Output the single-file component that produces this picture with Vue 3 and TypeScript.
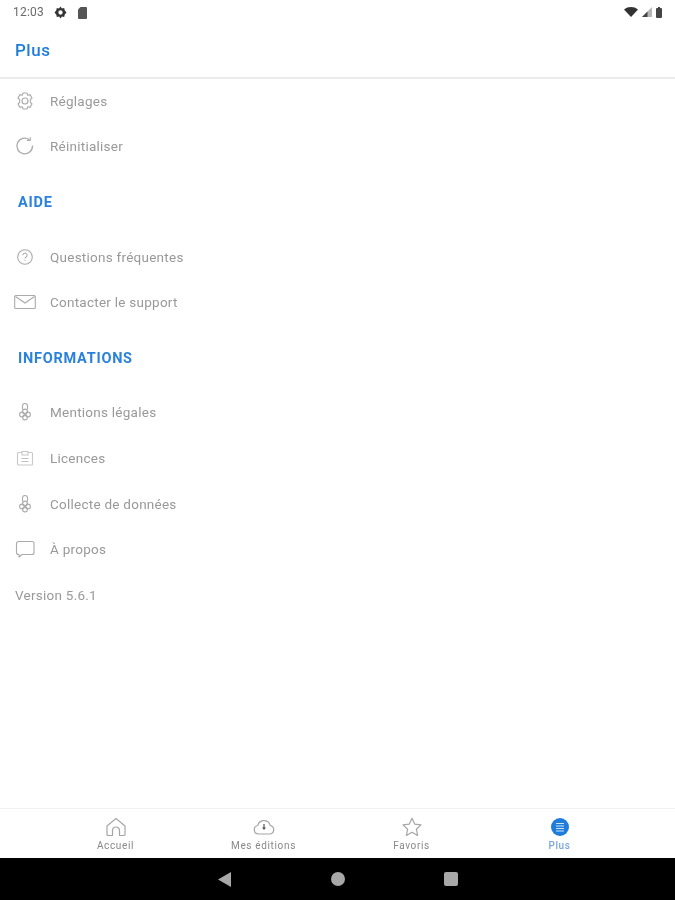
<template>
  <div class="screen">
    <div class="status-bar">
      <span class="clock">12:03</span>
      <svg class="status-icon" width="13" height="13" viewBox="0 0 24 24">
        <path fill="#333" fill-rule="evenodd" d="M12 1l2.600 3.400 4.200-.9.9 4.200L23 12l-3.300 4.300-.9 4.200-4.200-.9L12 23l-2.600-3.400-4.200.9-.9-4.200L1 12l3.300-4.300.9-4.200 4.200.9zM12 8a4 4 0 1 0 0 8 4 4 0 0 0 0-8z" />
      </svg>
      <svg class="status-icon" width="11" height="13" viewBox="0 0 11 13">
        <path fill="#555" d="M3.500 1H9a1 1 0 0 1 1 1v10a1 1 0 0 1-1 1H2a1 1 0 0 1-1-1V3.500z" />
      </svg>
      <span class="status-right">
        <svg width="14" height="10" viewBox="0 0 14 10">
          <path fill="#333" d="M0 2.500C2 .8 4.400 0 7 0s5 .8 7 2.500L7 10z" />
        </svg>
        <svg width="10" height="10" viewBox="0 0 10 10">
          <path fill="#b5b5b5" d="M10 0v10H0z" />
          <path fill="#444" d="M5.500 4.500V10H0z" />
        </svg>
        <svg width="6" height="11" viewBox="0 0 6 11">
          <path fill="#444" d="M2 0h2v1h1a1 1 0 0 1 1 1v8a1 1 0 0 1-1 1H1a1 1 0 0 1-1-1V2a1 1 0 0 1 1-1h1z" />
        </svg>
      </span>
    </div>

    <header class="app-header">Plus</header>

    <main class="content">
      <template v-for="section in sections" :key="section.title">
        <h2 v-if="section.title" class="section-title">{{ section.title }}</h2>
        <div v-for="item in section.items" :key="item.label" class="row">
          <span class="row-icon">
            <svg width="22" height="22" viewBox="0 0 22 22" fill="none" stroke="#ababab" stroke-width="1.1">
              <template v-if="item.icon === 'gear'">
                <path d="M9 3h4l.7 2.300 2.300-.7 2 3.400-1.700 1.700v2.600l1.700 1.700-2 3.400-2.300-.7L13 19H9l-.7-2.300-2.300.7-2-3.400 1.700-1.700V9.700L4 8l2-3.400 2.300.7z" stroke-linejoin="round" />
                <circle cx="11" cy="11" r="3" />
              </template>
              <template v-else-if="item.icon === 'reset'">
                <path d="M18.500 10.500v.5a7.800 7.800 0 1 1-3.200-6.300" stroke-width="1.300" />
                <path d="M16.200 2.200v3.200H13" />
              </template>
              <template v-else-if="item.icon === 'help'">
                <circle cx="11" cy="11" r="7.300" />
                <path d="M8.900 9.200a2.100 2.100 0 1 1 3.200 1.800c-.7.400-1.100.8-1.100 1.500" />
                <circle cx="11" cy="14.500" r=".6" fill="#ababab" stroke="none" />
              </template>
              <template v-else-if="item.icon === 'mail'">
                <rect x=".7" y="4.500" width="20.600" height="13" rx="1" />
                <path d="M1.500 5.500L11 12l9.500-6.500" />
              </template>
              <template v-else-if="item.icon === 'badge'">
                <path d="M8.500 8.500V5a2.500 2.500 0 0 1 5 0v3.500" />
                <circle cx="11" cy="10.500" r="2.400" />
                <circle cx="8" cy="13.500" r="2.400" />
                <circle cx="14" cy="13.500" r="2.400" />
                <circle cx="11" cy="16.500" r="2.400" />
              </template>
              <template v-else-if="item.icon === 'licence'">
                <path d="M8 5.500H4.500a1 1 0 0 0-1 1V17a1 1 0 0 0 1 1h13a1 1 0 0 0 1-1V6.500a1 1 0 0 0-1-1H14" stroke="#c8c8c8" />
                <path d="M8 8V4.500h6V8z" stroke="#c8c8c8" />
                <path d="M7.500 11.500h7M7.500 14.500h7" stroke="#c0c0c0" />
              </template>
              <template v-else-if="item.icon === 'chat'">
                <path d="M4.500 3.500h13.500a2 2 0 0 1 2 2v9a2 2 0 0 1-2 2H8l-3 2.500v-2.500h-.5a2 2 0 0 1-2-2v-9a2 2 0 0 1 2-2z" stroke-linejoin="round" />
              </template>
            </svg>
          </span>
          <span class="row-label">{{ item.label }}</span>
        </div>
      </template>
      <div class="version">Version 5.6.1</div>
    </main>

    <nav class="tab-bar">
      <div v-for="tab in tabs" :key="tab.label" class="tab" :class="{ active: tab.icon === 'plus' }">
        <svg width="22" height="22" viewBox="0 0 22 22" fill="none" stroke="#a6a6a6" stroke-width="1.200" stroke-linejoin="round">
          <template v-if="tab.icon === 'home'">
            <path d="M2 10l9-7.500 9 7.500v8.500a1 1 0 0 1-1 1h-4.500v-5a3.500 3.500 0 0 0-7 0v5H3a1 1 0 0 1-1-1z" />
          </template>
          <template v-else-if="tab.icon === 'cloud'">
            <path d="M5.500 18a4.300 4.300 0 0 1-.8-8.500 6.500 6.500 0 0 1 12.500-.2 4.500 4.500 0 0 1 .3 8.700z" />
            <path d="M11 8v4.500" stroke="#555" />
            <path d="M9 11.500h4l-2 2.500z" fill="#555" stroke="none" />
          </template>
          <template v-else-if="tab.icon === 'star'">
            <path d="M11 2.300l2.700 5.800 6.300.8-4.600 4.300 1.200 6.300L11 16.300l-5.600 3.200 1.200-6.300L2 8.900l6.300-.8z" />
          </template>
          <template v-else>
            <circle cx="11" cy="11" r="9" fill="#1e7ddb" stroke="none" />
            <path d="M7 7.500h8M7 10h8M7 12.500h8M7 15h8" stroke="#cfe2f7" stroke-width="1.200" />
          </template>
        </svg>
        <span class="tab-label">{{ tab.label }}</span>
      </div>
    </nav>

    <div class="system-nav">
      <svg width="14" height="15" viewBox="0 0 14 15"><path fill="#a8a8a8" d="M13 0v15L0 7.500z" /></svg>
      <span class="home-dot"></span>
      <span class="recent-square"></span>
    </div>
  </div>
</template>

<script setup lang="ts">
interface MenuItem {
  label: string
  icon: string
}

interface Section {
  title?: string
  items: MenuItem[]
}

const sections: Section[] = [
  {
    items: [
      { label: 'Réglages', icon: 'gear' },
      { label: 'Réinitialiser', icon: 'reset' },
    ],
  },
  {
    title: 'AIDE',
    items: [
      { label: 'Questions fréquentes', icon: 'help' },
      { label: 'Contacter le support', icon: 'mail' },
    ],
  },
  {
    title: 'INFORMATIONS',
    items: [
      { label: 'Mentions légales', icon: 'badge' },
      { label: 'Licences', icon: 'licence' },
      { label: 'Collecte de données', icon: 'badge' },
      { label: 'À propos', icon: 'chat' },
    ],
  },
]

const tabs = [
  { label: 'Accueil', icon: 'home' },
  { label: 'Mes éditions', icon: 'cloud' },
  { label: 'Favoris', icon: 'star' },
  { label: 'Plus', icon: 'plus' },
]
</script>

<style>
html,
body {
  margin: 0;
  background: #fff;
}
</style>

<style scoped>
.screen {
  width: 675px;
  height: 900px;
  display: flex;
  flex-direction: column;
  overflow: hidden;
  background: #fff;
  font-family: Roboto, "Liberation Sans", sans-serif;
  filter: blur(0.4px);
}
.status-bar {
  height: 24px;
  flex: none;
  display: flex;
  align-items: center;
  padding: 0 13px 0 13px;
  color: #6a6a6a;
}
.clock {
  font-size: 12px;
  letter-spacing: 0.2px;
  margin-right: 10px;
}
.status-icon {
  margin-right: 10px;
}
.status-icon:last-of-type {
  margin-right: 0;
}
.status-right {
  margin-left: auto;
  display: flex;
  align-items: center;
  gap: 4px;
}
.app-header {
  height: 55px;
  flex: none;
  box-sizing: border-box;
  padding: 0 0 2px 15px;
  display: flex;
  align-items: center;
  font-size: 17px;
  font-weight: 500;
  letter-spacing: 0.5px;
  color: #1e7ddb;
  border-bottom: 2px solid #ececec;
}
.content {
  flex: 1;
  margin-top: -1px;
}
.section-title {
  height: 64.6px;
  box-sizing: border-box;
  margin: 0;
  padding: 2px 0 0 18px;
  display: flex;
  align-items: center;
  font-size: 14.500px;
  font-weight: 700;
  letter-spacing: 0.75px;
  color: #2a82dc;
}
.row {
  height: 45.6px;
  display: flex;
  align-items: center;
  font-size: 13.500px;
  letter-spacing: 0.25px;
  color: #999;
}
.row-icon {
  width: 50px;
  padding-left: 14px;
  box-sizing: border-box;
  display: flex;
  align-items: center;
}
.version {
  height: 46px;
  display: flex;
  align-items: center;
  padding-left: 15px;
  font-size: 13.500px;
  letter-spacing: 0.25px;
  color: #999;
}
.tab-bar {
  height: 50px;
  flex: none;
  box-sizing: border-box;
  display: grid;
  grid-template-columns: repeat(4, 148px);
  justify-content: center;
  border-top: 1px solid #f1f1f1;
  background: #fff;
}
.tab {
  display: flex;
  flex-direction: column;
  align-items: center;
  padding-top: 7px;
}
.tab-label {
  font-size: 10px;
  letter-spacing: 0.65px;
  color: #888;
  margin-top: 2px;
}
.tab.active .tab-label {
  color: #7aa6e0;
  font-weight: 500;
}
.system-nav {
  height: 42px;
  flex: none;
  background: #000;
  display: grid;
  grid-template-columns: 113px 113px 112px;
  justify-content: center;
  justify-items: center;
  align-items: center;
}
.home-dot {
  width: 14px;
  height: 14px;
  border-radius: 50%;
  background: #a8a8a8;
}
.recent-square {
  width: 14px;
  height: 14px;
  border-radius: 2px;
  background: #a8a8a8;
}
</style>
